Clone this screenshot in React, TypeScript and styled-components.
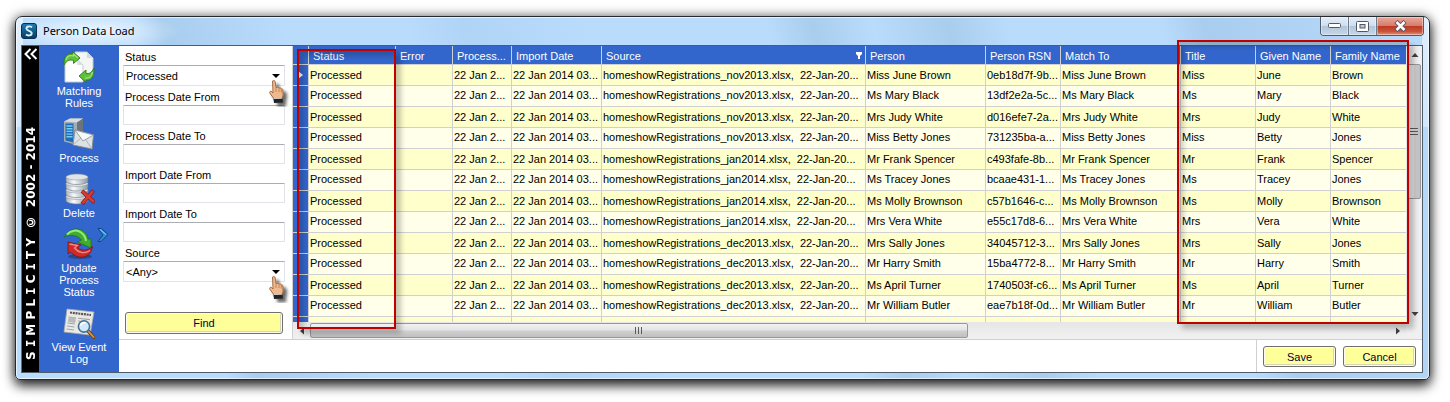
import React from "react";
import styled, { createGlobalStyle, css } from "styled-components";

const GlobalStyle = createGlobalStyle`
  * { box-sizing: border-box; }
  body {
    margin: 0;
    background: #fff;
    color: #000;
    font-family: "Liberation Sans", Arial, sans-serif;
    font-size: 11px;
  }
  button, input, select { font: inherit; color: inherit; }
`;

const Page = styled.div`
  height: 100vh;
  min-height: 402px;
  padding: 16px 20px 22px 15px;
  display: flex;
`;

const Window = styled.main`
  flex: 1;
  min-width: 0;
  display: flex;
  flex-direction: column;
  padding: 0 6px 6px 5px;
  border: 1px solid #26292d;
  border-radius: 7px 7px 5px 5px;
  background:
    linear-gradient(to bottom, rgba(255, 255, 255, 0.55), rgba(255, 255, 255, 0.35) 110px, transparent 110px) left / 7px 100% no-repeat,
    linear-gradient(to bottom, rgba(255, 255, 255, 0.55), rgba(255, 255, 255, 0.35) 110px, transparent 110px) right / 7px 100% no-repeat,
    linear-gradient(75deg, #b9dcfd 0%, #b9dcfd 14%, #a9cdee 16%, #b9dcfd 24%, #b9dcfd 32%, #b0d4f6 36%, #b9dcfd 44%, #b9dcfd 56%, #a9cdec 59%, #b9dcfd 63%, #a9cdec 68%, #b9dcfd 72%, #b9dcfd 82%, #a9cdee 85%, #b9dcfd 100%);
  box-shadow:
    inset 0 0 0 1px rgba(255, 255, 255, 0.65),
    0 0 12px rgba(0, 0, 0, 0.5),
    0 6px 12px rgba(0, 0, 0, 0.75);
`;

const TitleBar = styled.header`
  flex: none;
  height: 28px;
  display: flex;
  align-items: center;
  gap: 6px;
  background: radial-gradient(ellipse 90px 20px at 70px 14px, rgba(255, 255, 255, 0.75), rgba(255, 255, 255, 0));
`;

const AppTitle = styled.h1`
  flex: 1;
  margin: 0;
  font: 400 11px/16px "Noto Sans", "Open Sans", sans-serif;
`;

const WindowButtons = styled.div`
  align-self: flex-start;
  display: flex;
  margin-right: -1px;
  border: 1px solid #515c6b;
  border-top: 0;
  border-radius: 0 0 4px 4px;
  overflow: hidden;
`;

const WindowButton = styled.button<{ $close?: boolean }>`
  width: ${(p) => (p.$close ? 46 : 28)}px;
  height: 18px;
  padding: 0;
  display: grid;
  place-items: center;
  border: 0;
  border-right: ${(p) => (p.$close ? "0" : "1px solid #6d7a8a")};
  background: ${(p) =>
    p.$close
      ? "linear-gradient(#e9a99b, #d67c6c 48%, #bd3a22 52%, #c9533a 80%, #e2937a)"
      : "linear-gradient(#e3edf8, #cfdeee 48%, #b2c5da 52%, #c6d7e9)"};
  box-shadow: inset 0 0 0 1px rgba(255, 255, 255, 0.4);
`;

const Client = styled.div`
  flex: 1;
  min-height: 0;
  display: flex;
  border: 1px solid #4e5c6b;
  border-left-color: #5f6d7c;
  background: #fff;
`;

const BrandStrip = styled.aside`
  flex: none;
  width: 17px;
  padding: 2px 0 12px;
  display: flex;
  flex-direction: column;
  align-items: center;
  justify-content: space-between;
  background: #000;
  color: #fff;
`;

const CollapseButton = styled.button`
  padding: 0;
  border: 0;
  background: none;
  line-height: 0;
`;

const BrandText = styled.div`
  writing-mode: vertical-rl;
  transform: rotate(180deg);
  white-space: pre;
  font: 700 12px/16px Verdana, "DejaVu Sans", sans-serif;
`;

const SlabLetter = styled.span`
  font-family: Verdana, "DejaVu Sans Mono", monospace;
`;

const Nav = styled.nav`
  flex: none;
  width: 80px;
  padding-top: 5px;
  display: flex;
  flex-direction: column;
  gap: 9px;
  background: #3366cc;
`;

const NavButton = styled.button`
  position: relative;
  padding: 0 10px;
  display: flex;
  flex-direction: column;
  align-items: center;
  gap: 2px;
  border: 0;
  background: none;
  color: #fff;
  line-height: 12px;
  text-align: center;
`;

const Flyout = styled.span`
  position: absolute;
  top: 0;
  right: 10px;
  line-height: 0;
`;

const Main = styled.div`
  flex: 1;
  min-width: 0;
  display: flex;
  flex-direction: column;
`;

const Workspace = styled.div`
  flex: 1;
  min-height: 0;
  display: flex;
`;

const SearchForm = styled.form`
  flex: none;
  width: 173px;
  padding: 4px 7px 4px 4px;
  display: flex;
  flex-direction: column;
  gap: 4px;
`;

const Field = styled.div`
  position: relative;
  display: flex;
  flex-direction: column;
`;

const Label = styled.label`
  padding-left: 2px;
  line-height: 15px;
`;

const controlStyle = css`
  width: 100%;
  border: 1px solid #e2e3ea;
  border-top-color: #abadb3;
  border-radius: 1px;
  background: #fff;
  outline: 0;
`;

const TextInput = styled.input`
  ${controlStyle}
  height: 20px;
  padding: 0 3px;
`;

const Select = styled.select`
  ${controlStyle}
  height: 21px;
  padding: 0 2px;
  appearance: none;
`;

const Caret = styled.svg`
  position: absolute;
  right: 5px;
  bottom: 8px;
  pointer-events: none;
`;

const Pointer = styled.svg`
  position: absolute;
  right: -8px;
  bottom: -21px;
  z-index: 1;
  pointer-events: none;
`;

const ActionButton = styled.button`
  height: 21px;
  padding: 0;
  border: 1px solid #707070;
  border-radius: 3px;
  background: #ffff99;
  box-shadow: inset 0 0 0 1px #fbfbf0, inset -1px -1px 0 1px #d6d6b4;
  color: #000040;
`;

const FindButton = styled(ActionButton)`
  height: 22px;
  margin: 26px 2px 0;
`;

const FooterButton = styled(ActionButton)`
  width: 73px;
`;

const GridPanel = styled.section`
  position: relative;
  flex: 1;
  min-width: 0;
  display: grid;
  grid-template-columns: 1fr 16px;
  grid-template-rows: 1fr 17px;
  border-left: 1px solid #d0d0d0;
  background: #f0f0f0;
`;

const Viewport = styled.div`
  min-width: 0;
  min-height: 0;
  overflow: hidden;
`;

const Table = styled.table`
  width: 100%;
  table-layout: fixed;
  border-spacing: 0;
`;

const HeadCell = styled.th<{ $last?: boolean }>`
  height: 19px;
  padding: 1px 0 0 4px;
  border-right: ${(p) => (p.$last ? "0" : "1px solid #d0d0d0")};
  border-bottom: 1px solid #d0d0d0;
  background: #3366cc;
  color: #fff;
  font-weight: 400;
  text-align: left;
  white-space: nowrap;
  overflow: hidden;
`;

const HeadContent = styled.div`
  display: flex;
  align-items: center;
  justify-content: space-between;
  padding-right: 3px;
`;

const BodyRow = styled.tr`
  background: #ffffcc;
  &:nth-child(even) { background: #ffffea; }
  &:nth-child(even) td { padding-bottom: 2px; }
`;

const Cell = styled.td<{ $last?: boolean }>`
  height: 21px;
  padding: 0 0 0 1px;
  border-right: ${(p) => (p.$last ? "0" : "1px solid #d0d0d0")};
  border-bottom: 1px solid #d0d0d0;
  white-space: pre;
  overflow: hidden;
`;

const RowHead = styled(Cell)`
  padding: 0;
  background: #3366cc;
  line-height: 0;
  text-align: center;
`;

const VerticalBar = styled.div`
  display: flex;
  flex-direction: column;
  background: linear-gradient(to right, #e6e6e6, #f1f1f1);
`;

const HorizontalBar = styled.div`
  display: flex;
  background: linear-gradient(#e6e6e6, #f1f1f1);
`;

const ScrollButton = styled.button`
  flex: none;
  width: 17px;
  height: 17px;
  padding: 0;
  display: grid;
  place-items: center;
  border: 0;
  background: none;
`;

const Track = styled.div<{ $vertical?: boolean }>`
  flex: 1;
  display: flex;
  flex-direction: ${(p) => (p.$vertical ? "column" : "row")};
  padding: ${(p) => (p.$vertical ? "1px 1px 0" : "1px 0")};
`;

const Thumb = styled.div<{ $vertical?: boolean }>`
  flex: 0 0 ${(p) => (p.$vertical ? "56%" : "61%")};
  display: grid;
  place-items: center;
  border: 1px solid #989898;
  border-radius: 2px;
  background: linear-gradient(${(p) => (p.$vertical ? "to right" : "to bottom")}, #f2f2f2, #e4e4e4 45%, #cfcfcf 55%, #c0c0c4);
`;

const Highlight = styled.div<{ $side: "left" | "right" }>`
  position: absolute;
  border: 2px solid #c00000;
  pointer-events: none;
  box-shadow: 5px 5px 5px rgba(0, 0, 0, 0.22), inset 5px 5px 5px rgba(0, 0, 0, 0.18);
  ${(p) =>
    p.$side === "left"
      ? css`
          left: 4px;
          top: 3px;
          bottom: 10px;
          width: 99px;
        `
      : css`
          right: 13px;
          top: -6px;
          bottom: 15px;
          width: 232px;
        `}
`;

const Footer = styled.footer`
  flex: none;
  display: flex;
  justify-content: flex-end;
  border-top: 1px solid #d0d0d0;
`;

const FooterActions = styled.div`
  display: flex;
  gap: 7px;
  padding: 6px 6px 5px;
  border-left: 1px solid #d0d0d0;
`;

function AppLogo() {
  return (
    <svg width="16" height="16" viewBox="0 0 16 16" aria-hidden="true">
      <defs>
        <linearGradient id="logo" x1="0" y1="0" x2="0" y2="1">
          <stop offset="0" stopColor="#1f7fb4" />
          <stop offset="1" stopColor="#08395f" />
        </linearGradient>
      </defs>
      <rect x="0.5" y="0.5" width="15" height="15" rx="2.5" fill="url(#logo)" stroke="#0a3150" />
      <path d="M11 4.2C9.300 3 5.400 3 5.400 5.600C5.400 8.300 10.700 7.300 10.700 10.200C10.700 12.900 6.600 12.900 4.900 11.600" fill="none" stroke="#d9f0fb" strokeWidth="1.900" />
    </svg>
  );
}

function MatchingIcon() {
  return (
    <svg width="32" height="32" viewBox="0 0 32 32" aria-hidden="true">
      <path d="M12 1H24L30 7V25H12Z" fill="#f4f6f6" stroke="#c6cccf" />
      <path d="M24 1V7H30Z" fill="#d5dadd" />
      <path d="M2 8H14L20 14V31H2Z" fill="#fff" stroke="#c6cccf" />
      <path d="M14 8V14H20Z" fill="#dde1e3" />
      <path d="M1 12C1 5 5 2 9.500 3V0.500L17 7L10.500 12.500V9.500C7 8.500 4 9 1 14Z" fill="#5fc13a" stroke="#257a17" strokeWidth="0.900" />
      <path d="M31 19C31 26 28 30 23 29V31.500L16 25L23 19V22.500C26 23 28.500 22 31 17Z" fill="#5fc13a" stroke="#257a17" strokeWidth="0.900" />
      <path d="M3 9C4 5.500 7 4 10.500 5V3L15 7" fill="none" stroke="#a7e37f" strokeWidth="1.200" />
      <path d="M29.500 21C29 25.500 26 27.500 22 27" fill="none" stroke="#a7e37f" strokeWidth="1.200" />
    </svg>
  );
}

function ProcessIcon() {
  return (
    <svg width="32" height="32" viewBox="0 0 32 32" aria-hidden="true">
      <path d="M1 3.500L7 0.500H20V20L14 27L1 23.500Z" fill="#a4adb3" />
      <path d="M1 3.500L7 0.500H20L14 4.500Z" fill="#d6dbde" />
      <path d="M14 4.500L20 0.500V20L14 27Z" fill="#6a747c" />
      <path d="M2.500 5.500H10.500V24.500L2.500 22.500Z" fill="#1c6fb5" />
      <path d="M3.500 8H9.500M3.500 10.700H9.500M3.500 13.400H9.500M3.500 16.100H9.500M3.500 18.800H9.500" stroke="#7cc8f7" strokeWidth="1.400" />
      <path d="M12 12L30.500 17L29 31L10 27Z" fill="#dfe2e4" stroke="#7f898f" strokeWidth="0.900" />
      <path d="M10 27L18 20M29 31L22.500 21.500" stroke="#a9b0b4" strokeWidth="0.900" />
      <path d="M12 12L20 23L30.500 17Z" fill="#f7f8f8" stroke="#8f989d" strokeWidth="0.900" />
    </svg>
  );
}

function DeleteIcon() {
  return (
    <svg width="32" height="32" viewBox="0 0 32 32" aria-hidden="true">
      <defs>
        <linearGradient id="drum" x1="0" x2="1">
          <stop offset="0" stopColor="#a9b2b9" />
          <stop offset="0.350" stopColor="#fafbfb" />
          <stop offset="1" stopColor="#8c979f" />
        </linearGradient>
      </defs>
      {[22, 15.500, 9, 2.500].map((y) => (
        <g key={y}>
          <path d={`M3 ${y + 1.500}V${y + 6}C5 ${y + 10} 23 ${y + 10} 25 ${y + 6}V${y + 1.500}Z`} fill="url(#drum)" stroke="#6f7d88" strokeWidth="0.600" />
          <ellipse cx="14" cy={y + 1.500} rx="11" ry="3" fill="#dfe4e7" stroke="#8793a0" strokeWidth="0.500" />
        </g>
      ))}
      <path d="M19 18L31.500 29.500M30.500 17.500L19 31" stroke="#8f1d1d" strokeWidth="4" />
      <path d="M19.500 18.500L31 29M30 18L19.500 30.500" stroke="#d83a36" strokeWidth="2.500" />
    </svg>
  );
}

function UpdateIcon() {
  return (
    <svg width="32" height="32" viewBox="0 0 32 32" aria-hidden="true">
      <ellipse cx="17" cy="28.500" rx="12" ry="2.500" fill="#1c2c52" opacity="0.500" />
      <path d="M1.500 9C4.500 2.500 11 -0.500 17 1.500C21.500 3 24.500 6.500 25 11H28V20L14.500 14L18.500 12C15.500 8 7.500 5.500 1.500 9Z" fill="#3fae30" stroke="#1f7417" strokeWidth="0.800" />
      <path d="M4 6.500C8 2 14 1.500 18 4.500C21 6.500 22.500 9.500 23 13" fill="none" stroke="#9be883" strokeWidth="2" />
      <path d="M29.500 18.500C28.500 26 23 30 16.500 29C12.500 28.300 9.500 26.500 7.500 24L5 26V14L18 17L14.500 19.500C19 23.500 24.500 23 29.500 18.500Z" fill="#cf2a2a" stroke="#801212" strokeWidth="0.800" />
      <path d="M6.500 16L14.500 17.500L11.500 20C15 24.500 21 26.500 27 22.500" fill="none" stroke="#f08a80" strokeWidth="1.300" />
    </svg>
  );
}

function EventLogIcon() {
  return (
    <svg width="32" height="32" viewBox="0 0 32 32" aria-hidden="true">
      <path d="M4 2L31 5L27 28L1 25Z" fill="#e9e9e6" stroke="#a9aba9" strokeWidth="0.800" />
      <path d="M7 5.500L28 8" stroke="#555" strokeWidth="2.200" strokeDasharray="2 0.800" />
      <path d="M5.500 10L13 11M5 13L12.500 14M4.500 16L12 17M4 19L11.500 20M3.500 22L11 23M15 11.200L27 12.600M15 14L21 14.800" stroke="#a3a5a5" strokeWidth="1.100" />
      <path d="M6 10L13 11L12 16L5 15Z" fill="#b9bbbb" />
      <path d="M25 24L31 30.500" stroke="#6b4420" strokeWidth="3.500" strokeLinecap="round" />
      <path d="M25.500 24.500L30.500 30" stroke="#d99545" strokeWidth="1.800" strokeLinecap="round" />
      <circle cx="21" cy="19.500" r="5.600" fill="#cfeafc" stroke="#4c6f94" strokeWidth="1.600" />
      <path d="M17.500 18.500C18.500 16 20.500 15.200 23 15.800" fill="none" stroke="#fff" strokeWidth="1.500" />
    </svg>
  );
}

function HandPointer() {
  return (
    <Pointer width="26" height="28" viewBox="0 0 26 28" aria-hidden="true">
      <defs>
        <filter id="handShadow" x="-50%" y="-50%" width="200%" height="200%">
          <feDropShadow dx="3.500" dy="3.500" stdDeviation="1.500" floodColor="#000" floodOpacity="0.600" />
        </filter>
      </defs>
      <g filter="url(#handShadow)">
        <path d="M5.500 2C6.500 0.800 8 1.500 8.200 3L9 8.500C10.500 8 11.500 8.300 12 9C13 8.600 14 9 14.300 9.800C15.600 9.600 16 10.500 16 12V16.500L14.500 20.500H7.500L3 14.500C2 13 3.500 11.500 4.700 12.500L6 14Z" fill="#efb98d" stroke="#9a6238" strokeWidth="0.900" />
        <path d="M9 8.500V13M12 9V13M14.300 10V13.500" stroke="#b97a4c" strokeWidth="0.800" />
        <path d="M6.500 20L15.500 19.500L16 23.500L7 24Z" fill="#222" />
        <path d="M7 19.500L15 19" stroke="#c8ccd0" strokeWidth="1.200" />
      </g>
    </Pointer>
  );
}

function Arrow({ dir }: { dir: "up" | "down" | "left" | "right" }) {
  const paths = {
    up: "M0.500 6L4 2L7.500 6Z",
    down: "M0.500 2L4 6L7.500 2Z",
    left: "M6 0.500L2 4L6 7.500Z",
    right: "M2 0.500L6 4L2 7.500Z",
  };
  return (
    <svg width="8" height="8" viewBox="0 0 8 8" aria-hidden="true">
      <path d={paths[dir]} fill="#404040" />
    </svg>
  );
}

const navItems = [
  { label: "Matching Rules", Icon: MatchingIcon },
  { label: "Process", Icon: ProcessIcon },
  { label: "Delete", Icon: DeleteIcon },
  { label: "Update Process Status", Icon: UpdateIcon, flyout: true },
  { label: "View Event Log", Icon: EventLogIcon },
];

const columns = [
  { label: "Status", width: 87 },
  { label: "Error", width: 57 },
  { label: "Process...", width: 59 },
  { label: "Import Date", width: 90 },
  { label: "Source", width: 264, sorted: true },
  { label: "Person", width: 120 },
  { label: "Person RSN", width: 75 },
  { label: "Match To", width: 120 },
  { label: "Title", width: 75 },
  { label: "Given Name", width: 75 },
  { label: "Family Name", width: 75 },
];

const people: [string, string, string, string, string][] = [
  ["nov2013", "0eb18d7f-9b...", "Miss", "June", "Brown"],
  ["nov2013", "13df2e2a-5c...", "Ms", "Mary", "Black"],
  ["nov2013", "d016efe7-2a...", "Mrs", "Judy", "White"],
  ["nov2013", "731235ba-a...", "Miss", "Betty", "Jones"],
  ["jan2014", "c493fafe-8b...", "Mr", "Frank", "Spencer"],
  ["jan2014", "bcaae431-1...", "Ms", "Tracey", "Jones"],
  ["jan2014", "c57b1646-c...", "Ms", "Molly", "Brownson"],
  ["jan2014", "e55c17d8-6...", "Mrs", "Vera", "White"],
  ["dec2013", "34045712-3...", "Mrs", "Sally", "Jones"],
  ["dec2013", "15ba4772-8...", "Mr", "Harry", "Smith"],
  ["dec2013", "1740503f-c6...", "Ms", "April", "Turner"],
  ["dec2013", "eae7b18f-0d...", "Mr", "William", "Butler"],
];

const rows = people.map(([batch, rsn, title, given, family]) => {
  const person = `${title} ${given} ${family}`;
  return [
    "Processed",
    "",
    "22 Jan 2...",
    "22 Jan 2014 03...",
    `homeshowRegistrations_${batch}.xlsx,  22-Jan-20...`,
    person,
    rsn,
    person,
    title,
    given,
    family,
  ];
});

const tableRows = [...rows, columns.map(() => "")];

function DropDown({ id, label, options }: { id: string; label: string; options: string[] }) {
  return (
    <Field>
      <Label htmlFor={id}>{label}</Label>
      <Select id={id} defaultValue={options[0]}>
        {options.map((o) => (
          <option key={o}>{o}</option>
        ))}
      </Select>
      <Caret width="8" height="4" viewBox="0 0 8 4" aria-hidden="true">
        <path d="M0 0H8L4 4Z" />
      </Caret>
      <HandPointer />
    </Field>
  );
}

function TextField({ id, label }: { id: string; label: string }) {
  return (
    <Field>
      <Label htmlFor={id}>{label}</Label>
      <TextInput id={id} type="text" />
    </Field>
  );
}

export default function App() {
  return (
    <Page>
      <GlobalStyle />
      <Window>
        <TitleBar>
          <AppLogo />
          <AppTitle>Person Data Load</AppTitle>
          <WindowButtons>
            <WindowButton type="button" aria-label="Minimize">
              <svg width="13" height="6" viewBox="0 0 13 6">
                <rect x="0.500" y="0.500" width="12" height="4" rx="1" fill="#fff" stroke="#535666" />
              </svg>
            </WindowButton>
            <WindowButton type="button" aria-label="Maximize">
              <svg width="13" height="11" viewBox="0 0 13 11">
                <rect x="0.500" y="0.500" width="12" height="10" rx="1" fill="#fff" stroke="#535666" />
                <rect x="4" y="3.500" width="5" height="3.500" fill="#b9cade" stroke="#535666" />
              </svg>
            </WindowButton>
            <WindowButton type="button" aria-label="Close" $close>
              <svg width="13" height="12" viewBox="0 0 13 12">
                <path d="M2 1.500L11 10.500M11 1.500L2 10.500" stroke="#535666" strokeWidth="4.500" />
                <path d="M2.500 2L10.500 10M10.500 2L2.500 10" stroke="#fff" strokeWidth="2.500" />
              </svg>
            </WindowButton>
          </WindowButtons>
        </TitleBar>

        <Client>
          <BrandStrip>
            <CollapseButton type="button" aria-label="Collapse">
              <svg width="14" height="12" viewBox="0 0 14 12" fill="none" stroke="#fff" strokeWidth="2">
                <path d="M6.500 1L1.500 6L6.500 11M12.500 1L7.500 6L12.500 11" />
              </svg>
            </CollapseButton>
            <BrandText>
              S <SlabLetter>I</SlabLetter> M P L <SlabLetter>I</SlabLetter> C <SlabLetter>I</SlabLetter>
              {" T Y  ©  2002 - 2014"}
            </BrandText>
          </BrandStrip>

          <Nav>
            {navItems.map(({ label, Icon, flyout }) => (
              <NavButton key={label} type="button">
                <Icon />
                {label}
                {flyout && (
                  <Flyout>
                    <svg width="12" height="14" viewBox="0 0 12 14" aria-hidden="true">
                      <path d="M1 0.500H4.500L11 6.500L4 13.500H1L6 7Z" fill="#2c8fd6" stroke="#123e73" strokeWidth="0.900" />
                      <path d="M3 1.500L9 6.500" stroke="#8fd0f7" />
                    </svg>
                  </Flyout>
                )}
              </NavButton>
            ))}
          </Nav>

          <Main>
            <Workspace>
              <SearchForm onSubmit={(e) => e.preventDefault()}>
                <DropDown id="status" label="Status" options={["Processed"]} />
                <TextField id="process-from" label="Process Date From" />
                <TextField id="process-to" label="Process Date To" />
                <TextField id="import-from" label="Import Date From" />
                <TextField id="import-to" label="Import Date To" />
                <DropDown id="source" label="Source" options={["<Any>"]} />
                <FindButton type="submit">Find</FindButton>
              </SearchForm>

              <GridPanel>
                <Viewport>
                  <Table>
                    <colgroup>
                      <col width={16} />
                      {columns.map((c) => (
                        <col key={c.label} width={c.width} />
                      ))}
                    </colgroup>
                    <thead>
                      <tr>
                        <HeadCell aria-label="Row" />
                        {columns.map((c, i) => (
                          <HeadCell key={c.label} scope="col" $last={i === columns.length - 1}>
                            <HeadContent>
                              {c.label}
                              {c.sorted && (
                                <svg width="6" height="7" viewBox="0 0 6 7" aria-hidden="true">
                                  <path d="M0 0H6V2L4 4V7H2V4L0 2Z" fill="#fff" />
                                </svg>
                              )}
                            </HeadContent>
                          </HeadCell>
                        ))}
                      </tr>
                    </thead>
                    <tbody>
                      {tableRows.map((row, r) => (
                        <BodyRow key={r}>
                          <RowHead>
                            {r === 0 && (
                              <svg width="5" height="8" viewBox="0 0 5 8" aria-hidden="true">
                                <path d="M0 0L5 4L0 8Z" fill="#fff" />
                              </svg>
                            )}
                          </RowHead>
                          {row.map((text, c) => (
                            <Cell key={c} $last={c === row.length - 1}>
                              {text}
                            </Cell>
                          ))}
                        </BodyRow>
                      ))}
                    </tbody>
                  </Table>
                </Viewport>

                <VerticalBar>
                  <ScrollButton type="button" aria-label="Scroll up">
                    <Arrow dir="up" />
                  </ScrollButton>
                  <Track $vertical>
                    <Thumb $vertical>
                      <svg width="8" height="8" viewBox="0 0 8 8" stroke="#5a5a5a" aria-hidden="true">
                        <path d="M0 1.500H8M0 4.500H8M0 7.500H8" />
                      </svg>
                    </Thumb>
                  </Track>
                  <ScrollButton type="button" aria-label="Scroll down">
                    <Arrow dir="down" />
                  </ScrollButton>
                </VerticalBar>

                <HorizontalBar>
                  <ScrollButton type="button" aria-label="Scroll left">
                    <Arrow dir="left" />
                  </ScrollButton>
                  <Track>
                    <Thumb>
                      <svg width="8" height="8" viewBox="0 0 8 8" stroke="#5a5a5a" aria-hidden="true">
                        <path d="M0.500 0V7M3.500 0V7M6.500 0V7" />
                      </svg>
                    </Thumb>
                  </Track>
                  <ScrollButton type="button" aria-label="Scroll right">
                    <Arrow dir="right" />
                  </ScrollButton>
                </HorizontalBar>

                <Highlight $side="left" />
                <Highlight $side="right" />
              </GridPanel>
            </Workspace>

            <Footer>
              <FooterActions>
                <FooterButton type="button">Save</FooterButton>
                <FooterButton type="button">Cancel</FooterButton>
              </FooterActions>
            </Footer>
          </Main>
        </Client>
      </Window>
    </Page>
  );
}
